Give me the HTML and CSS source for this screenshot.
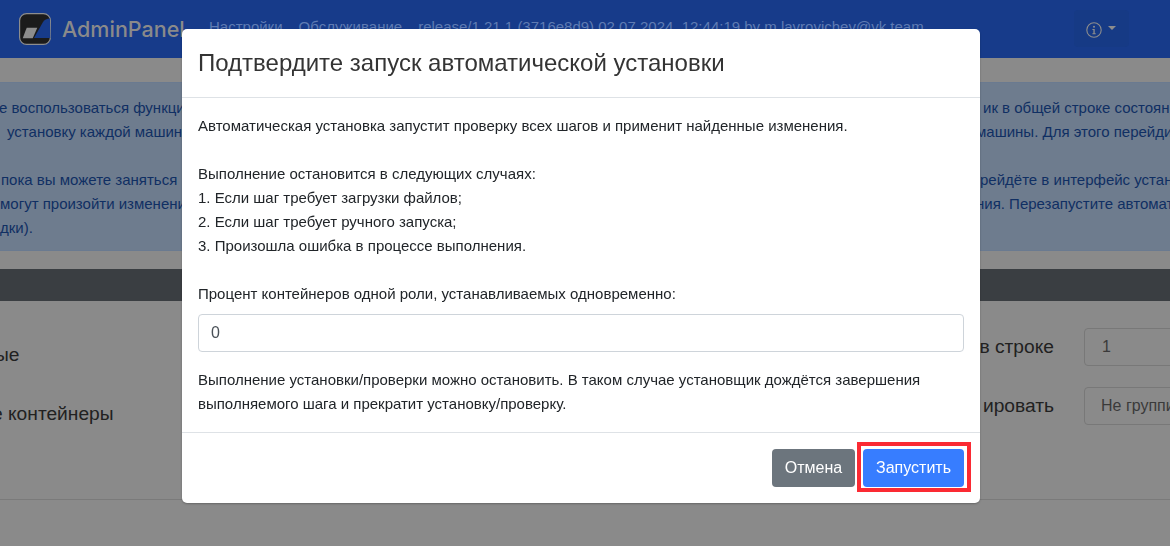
FILE: index.html
```html
<!DOCTYPE html>
<html lang="ru">
<head>
<meta charset="utf-8">
<title>AdminPanel</title>
<link rel="stylesheet" href="styles.css">
</head>
<body>
<div class="page">
  <header class="navbar">
    <svg class="logo" viewBox="0 0 32 32" aria-hidden="true">
      <rect x="0.6" y="0.6" width="30.8" height="30.8" rx="7" fill="#1b1b1b" stroke="#8d8d8d" stroke-width="1.2"/>
      <path d="M15 25 L24 9 Q26 5.5 31 5.5 L31.4 25 Z" fill="#173b8a"/>
      <path d="M7.7 14.7 H18.3 L13.7 25.3 H3.7 Z" fill="#8d8d8d"/>
    </svg>
    <span class="brand">AdminPanel</span>
    <nav class="links">
      <span>Настройки</span>
      <span>Обслуживание</span>
      <span>release/1.21.1 (3716e8d9) 02.07.2024, 12:44:19 by m.lavrovichev@vk.team</span>
    </nav>
    <div class="info-btn">
      <svg class="info-icon" viewBox="0 0 16 16" aria-hidden="true">
        <circle cx="8" cy="8" r="7.2" fill="none" stroke="#8d8d8d" stroke-width="1.1"/>
        <circle cx="8" cy="4.8" r="1" fill="#8d8d8d"/>
        <path d="M6.4 7h2.3v4.2h1v1H6.4v-1h1V8H6.4z" fill="#8d8d8d"/>
      </svg>
      <span class="caret"></span>
    </div>
  </header>

  <section class="alert">
    <div class="alert-row"><span class="l l1">е воспользоваться функци</span><span class="r r1">ик в общей строке состоян</span></div>
    <div class="alert-row"><span class="l l2">установку каждой машины</span><span class="r r2">машины. Для этого перейди</span></div>
    <div class="alert-row"></div>
    <div class="alert-row"><span class="l l4">пока вы можете заняться</span><span class="r r4">рейдёте в интерфейс устан</span></div>
    <div class="alert-row"><span class="l l5">могут произойти изменени</span><span class="r r5">ния. Перезапустите автомат</span></div>
    <div class="alert-row"><span class="l l6">дки).</span></div>
  </section>

  <div class="darkbar"></div>

  <section class="filters">
    <div class="filter-left">
      <div class="flabel flabel-a">ые</div>
      <div class="flabel flabel-b">е контейнеры</div>
    </div>
    <div class="filter-right">
      <div class="frow">
        <span class="flabel">в строке</span>
        <span class="fctl">1</span>
      </div>
      <div class="frow">
        <span class="flabel">ировать</span>
        <span class="fctl fctl-sel">Не группи</span>
      </div>
    </div>
  </section>
  <hr class="rule">
</div>

<div class="backdrop"></div>

<div class="modal">
  <div class="modal-head"><h2>Подтвердите запуск автоматической установки</h2></div>
  <div class="modal-body">
    <p>Автоматическая установка запустит проверку всех шагов и применит найденные изменения.</p>
    <p>Выполнение остановится в следующих случаях:<br>1. Если шаг требует загрузки файлов;<br>2. Если шаг требует ручного запуска;<br>3. Произошла ошибка в процессе выполнения.</p>
    <p class="tight">Процент контейнеров одной роли, устанавливаемых одновременно:</p>
    <div class="input">0</div>
    <p class="last">Выполнение установки/проверки можно остановить. В таком случае установщик дождётся завершения выполняемого шага и прекратит установку/проверку.</p>
  </div>
  <div class="modal-foot">
    <button class="btn btn-gray">Отмена</button>
    <button class="btn btn-blue">Запустить<span class="marker"></span></button>
  </div>
</div>
</body>
</html>
```
FILE: styles.css
```css
* { box-sizing: border-box; }
html, body { margin: 0; height: 100%; overflow: hidden; }
body { font-family: "Liberation Sans", Arial, sans-serif; background: #8a8a8a; color: #212529; }

.page { width: 1170px; height: 546px; overflow: hidden; }

.navbar { height: 58px; background: #173b8a; display: flex; align-items: flex-start; padding: 13px 0 0 19px; }
.logo { width: 32px; height: 32px; flex: none; }
.brand { font-family: Inter, "Liberation Sans", sans-serif; font-size: 21.5px; font-weight: 500; line-height: 32px; color: #8a8a8a; margin-left: 11px; width: 147px; flex: none; }
.links { display: flex; gap: 16px; font-size: 15px; line-height: 28px; color: #5f7bb3; white-space: nowrap; flex: none; width: 865px; }
.info-btn { width: 55px; height: 37px; margin-top: -3px; background: #163a85; border-radius: 4px; display: flex; align-items: center; padding-left: 12px; flex: none; }
.info-icon { width: 16px; height: 16px; margin-top: 3px; }
.caret { width: 0; height: 0; border-top: 4px solid #8d8d8d; border-left: 4px solid transparent; border-right: 4px solid transparent; margin: -2px 0 0 6px; }

.alert { margin-top: 24px; height: 169px; padding-top: 13px; background: #6e7c8e; border-top: 1px solid #6a7a90; border-bottom: 1px solid #6a7a90; font-size: 15px; line-height: 24px; color: #102f63; overflow: hidden; }
.alert-row { display: grid; grid-template-columns: 182px 798px 190px; height: 24px; white-space: nowrap; overflow: hidden; }
.l { display: block; overflow: hidden; }
.r { display: block; grid-column: 3; }
.l1 { margin-left: -1px; }
.l2 { padding-left: 7px; }
.l4 { padding-left: 1px; }
.r1 { margin-left: 3px; }
.r2 { margin-left: -4px; }
.r5 { margin-left: -4px; }

.darkbar { height: 32px; margin-top: 18px; background: #3a3e42; }

.filters { display: flex; justify-content: space-between; height: 198px; overflow: hidden; }
.filter-left { padding-top: 42px; width: 182px; overflow: hidden; }
.flabel { font-size: 19.2px; line-height: 24px; color: #212121; white-space: nowrap; }
.flabel-a { margin-left: -5px; }
.flabel-b { margin-top: 35px; margin-left: -8px; }
.filter-right { padding-top: 27px; width: 190px; }
.frow { display: flex; justify-content: flex-end; align-items: center; height: 38px; margin-bottom: 21px; gap: 30px; }
.fctl { flex: none; width: 104px; height: 38px; border: 1px solid #787878; border-radius: 4px; padding: 0 0 0 17px; line-height: 36px; font-size: 16px; color: #3a3a3a; white-space: nowrap; overflow: hidden; margin-right: -18px; }
.fctl-sel { padding-left: 16px; }
.rule { margin: 0; border: 0; border-top: 1px solid #7a7a7a; }

.backdrop { position: fixed; inset: 0; background: transparent; }

.modal { position: fixed; left: 182px; top: 29px; width: 798px; height: 474px; background: #fff; border-radius: 5px; box-shadow: 0 1px 2px rgba(0,0,0,.25); display: flex; flex-direction: column; }
.modal-head { height: 69px; padding: 17px 16px 16px; border-bottom: 1px solid #dee2e6; }
.modal-head h2 { margin: 0; font-size: 24px; font-weight: 400; line-height: 34px; color: #343434; }
.modal-body { flex: 1; padding: 16px 16px 0; font-size: 15px; line-height: 24px; color: #212529; }
.modal-body p { margin: 0 0 24px; }
.modal-body p.tight { margin-bottom: 8px; }
.modal-body p.last { margin: 16px 0 0; }
.input { height: 38px; border: 1px solid #ced4da; border-radius: 4px; padding: 0 12px; font-size: 16px; line-height: 36px; color: #495057; }
.modal-foot { height: 71px; border-top: 1px solid #dee2e6; display: flex; justify-content: flex-end; align-items: flex-start; padding: 16px 16px 0; gap: 8px; }
.btn { height: 38px; border: 0; border-radius: 4px; padding: 0 12px; font: 16px/38px "Liberation Sans", Arial, sans-serif; color: #fff; cursor: pointer; position: relative; }
.btn-gray { width: 83px; background: #6c757d; }
.btn-blue { width: 101px; background: #377dff; }
.marker { position: absolute; left: -6px; top: -7px; right: -7px; bottom: -5px; border: 4px solid #fb2a33; }
```
